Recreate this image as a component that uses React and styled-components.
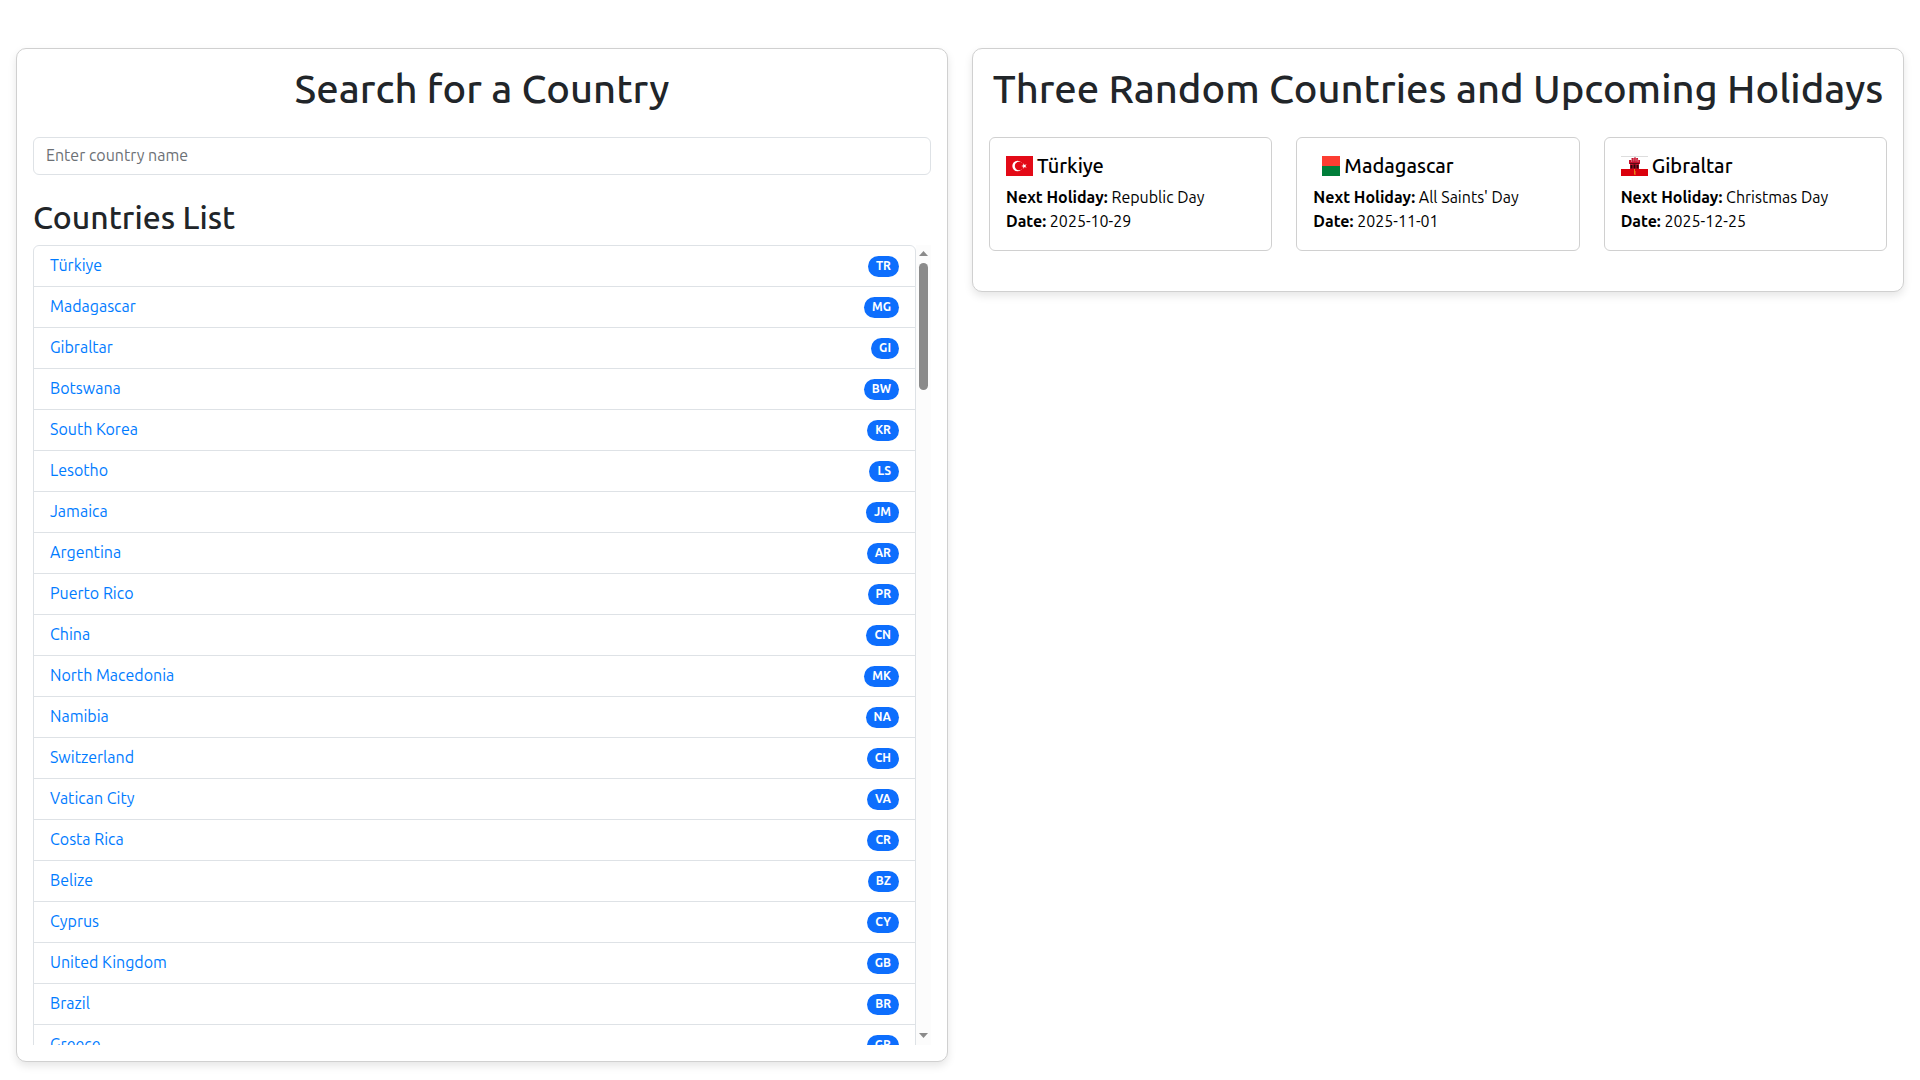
import React, { useState } from "react";
import styled, { createGlobalStyle } from "styled-components";

const GlobalStyle = createGlobalStyle`
  *, *::before, *::after { box-sizing: border-box; }
  body {
    margin: 0;
    background: #fff;
    color: #212529;
    font-family: Ubuntu, "Open Sans", "Noto Sans", sans-serif;
    font-size: 16px;
    line-height: 24px;
  }
`;

const Page = styled.main`
  display: grid;
  grid-template-columns: repeat(auto-fit, minmax(min(100%, 600px), 1fr));
  align-items: start;
  gap: 24px;
  padding: 48px 16px 18px;
`;

const Panel = styled.section`
  min-width: 0;
  padding: 16px;
  background: #fff;
  border: 1px solid #d0d0d0;
  border-radius: 10px;
  box-shadow: 0 4px 8px rgba(0, 0, 0, 0.1);
`;

const PanelTitle = styled.h1`
  margin: 0 0 24px;
  font-size: 40px;
  line-height: 48px;
  font-weight: 500;
  text-align: center;
`;

const ListTitle = styled.h2`
  margin: 24px 0 10px;
  font-size: 32px;
  line-height: 36px;
  font-weight: 500;
`;

const SearchBox = styled.input`
  display: block;
  width: 100%;
  padding: 5px 12px 7px;
  border: 1px solid #dee2e6;
  border-radius: 6px;
  background: #fff;
  color: inherit;
  font: inherit;
  line-height: 24px;
  &::placeholder { color: #6c7075; opacity: 1; }
`;

const ListFrame = styled.div`
  display: flex;
  height: 800px;
`;

const Scroller = styled.div`
  flex: 1;
  min-width: 0;
  overflow-y: auto;
  scrollbar-width: none;
`;

const ScrollRail = styled.div`
  display: flex;
  flex-direction: column;
  align-items: center;
  justify-content: space-between;
  width: 15px;
  padding: 6px 0 7px;
  background: #fcfcfc;
`;

const RailTop = styled.div`
  display: grid;
  justify-items: center;
  gap: 7px;
`;

const Arrow = styled.svg`
  display: block;
  width: 9px;
  height: 5px;
  fill: #8b8b8b;
`;

const Thumb = styled.div`
  width: 9px;
  height: 127px;
  border-radius: 5px;
  background: #8b8b8b;
`;

const CountryList = styled.ul`
  margin: 0;
  padding: 0;
  list-style: none;
  border: 1px solid #dee2e6;
  border-radius: 6px;
`;

const CountryRow = styled.li`
  display: flex;
  align-items: center;
  justify-content: space-between;
  height: 40px;
  padding: 0 16px;
  & + & {
    height: 41px;
    border-top: 1px solid #dee2e6;
  }
`;

const CountryLink = styled.a`
  padding-bottom: 2px;
  color: #007bff;
  text-decoration: none;
`;

const Badge = styled.span`
  padding: 4px 8px 5px;
  border-radius: 800px;
  background: #0d6efd;
  color: #fff;
  font-size: 12px;
  line-height: 12px;
  font-weight: 700;
`;

const HolidayGrid = styled.div`
  display: grid;
  grid-template-columns: repeat(3, minmax(0, 1fr));
  gap: 24px;
  padding-bottom: 24px;
`;

const HolidayCard = styled.article`
  padding: 16px 16px 17px;
  border: 1px solid #d0d0d0;
  border-radius: 6px;
  color: #000;
`;

const CardTitle = styled.h5`
  display: flex;
  align-items: center;
  gap: 4px;
  margin: 0 0 7px;
  font-size: 20px;
  line-height: 24px;
  font-weight: 500;
`;

const CardText = styled.p`
  margin: 0;
  strong { font-weight: 600; }
`;

const FlagSvg = styled.svg`
  width: 27px;
  height: 20px;
  flex: none;
`;

const flags = {
  TR: (
    <>
      <path fill="#e30a17" d="M0 0h27v20H0z" />
      <circle cx="11.500" cy="10" r="5.200" fill="#fff" />
      <circle cx="13" cy="10" r="4.200" fill="#e30a17" />
      <path fill="#fff" d="m15.300 10 2-.7v-2l1.300 1.600 2-.6-1.200 1.700 1.200 1.700-2-.6-1.300 1.600v-2z" />
    </>
  ),
  MG: (
    <>
      <path fill="#fff" d="M0 0h9v20H0z" />
      <path fill="#fc3d32" d="M9 0h18v10H9z" />
      <path fill="#007e3a" d="M9 10h18v10H9z" />
    </>
  ),
  GI: (
    <>
      <path fill="#fff" d="M0 0h27v20H0z" />
      <path stroke="#ddd" d="M0 .5h27" />
      <path fill="#da000c" d="M0 13h27v7H0z" />
      <path fill="#c5102c" d="M8 4h2.500V2H13v-.5h2V2h2v2h2v4h-1v5H9V8H8z" />
      <path stroke="#f3b8bf" strokeWidth=".6" d="M10.700 3v3M12.800 2v3.500M15 2v3.500M17 3v3" />
      <path stroke="#5a0a14" strokeWidth="1" d="M9 7.500h9" />
      <path fill="#2a0508" d="M9.500 9h2v3.500h-2zM12.500 8.500h2v4h-2zM15.500 9h2v3.500h-2z" />
      <path stroke="#e8841a" strokeWidth="1" fill="none" d="M13.500 13v5.500M13.500 18h1.500M13.500 16H15" />
    </>
  ),
};

function Flag({ code, name }) {
  return (
    <FlagSvg viewBox="0 0 27 20" role="img" aria-label={name}>
      {flags[code]}
    </FlagSvg>
  );
}

const holidays = [
  { code: "TR", name: "Türkiye", holiday: "Republic Day", date: "2025-10-29" },
  { code: "MG", name: "Madagascar", holiday: "All Saints' Day", date: "2025-11-01" },
  { code: "GI", name: "Gibraltar", holiday: "Christmas Day", date: "2025-12-25" },
];

const countries = `TR Türkiye,MG Madagascar,GI Gibraltar,BW Botswana,KR South Korea,LS Lesotho,JM Jamaica,AR Argentina,PR Puerto Rico,CN China,MK North Macedonia,NA Namibia,CH Switzerland,VA Vatican City,CR Costa Rica,BZ Belize,CY Cyprus,GB United Kingdom,BR Brazil,GR Greece`
  .split(",")
  .map((entry) => ({ code: entry.slice(0, 2), name: entry.slice(3) }));

export default function App() {
  const [query, setQuery] = useState("");
  const shown = countries.filter((c) =>
    c.name.toLowerCase().includes(query.toLowerCase())
  );
  return (
    <>
      <GlobalStyle />
      <Page>
        <Panel>
          <PanelTitle>Search for a Country</PanelTitle>
          <SearchBox
            type="text"
            aria-label="Country name"
            placeholder="Enter country name"
            value={query}
            onChange={(e) => setQuery(e.target.value)}
          />
          <ListTitle>Countries List</ListTitle>
          <ListFrame>
            <Scroller>
              <CountryList>
                {shown.map((c) => (
                  <CountryRow key={c.code}>
                    <CountryLink href={`#${c.code}`}>{c.name}</CountryLink>
                    <Badge>{c.code}</Badge>
                  </CountryRow>
                ))}
              </CountryList>
            </Scroller>
            <ScrollRail aria-hidden="true">
              <RailTop>
                <Arrow viewBox="0 0 9 5">
                  <path d="M0 5L4.500 0L9 5Z" />
                </Arrow>
                <Thumb />
              </RailTop>
              <Arrow viewBox="0 0 9 5">
                <path d="M0 0L4.500 5L9 0Z" />
              </Arrow>
            </ScrollRail>
          </ListFrame>
        </Panel>
        <Panel>
          <PanelTitle>Three Random Countries and Upcoming Holidays</PanelTitle>
          <HolidayGrid>
            {holidays.map((h) => (
              <HolidayCard key={h.code}>
                <CardTitle>
                  <Flag code={h.code} name={h.name} />
                  {h.name}
                </CardTitle>
                <CardText>
                  <strong>Next Holiday:</strong> {h.holiday}
                  <br />
                  <strong>Date:</strong> {h.date}
                </CardText>
              </HolidayCard>
            ))}
          </HolidayGrid>
        </Panel>
      </Page>
    </>
  );
}
